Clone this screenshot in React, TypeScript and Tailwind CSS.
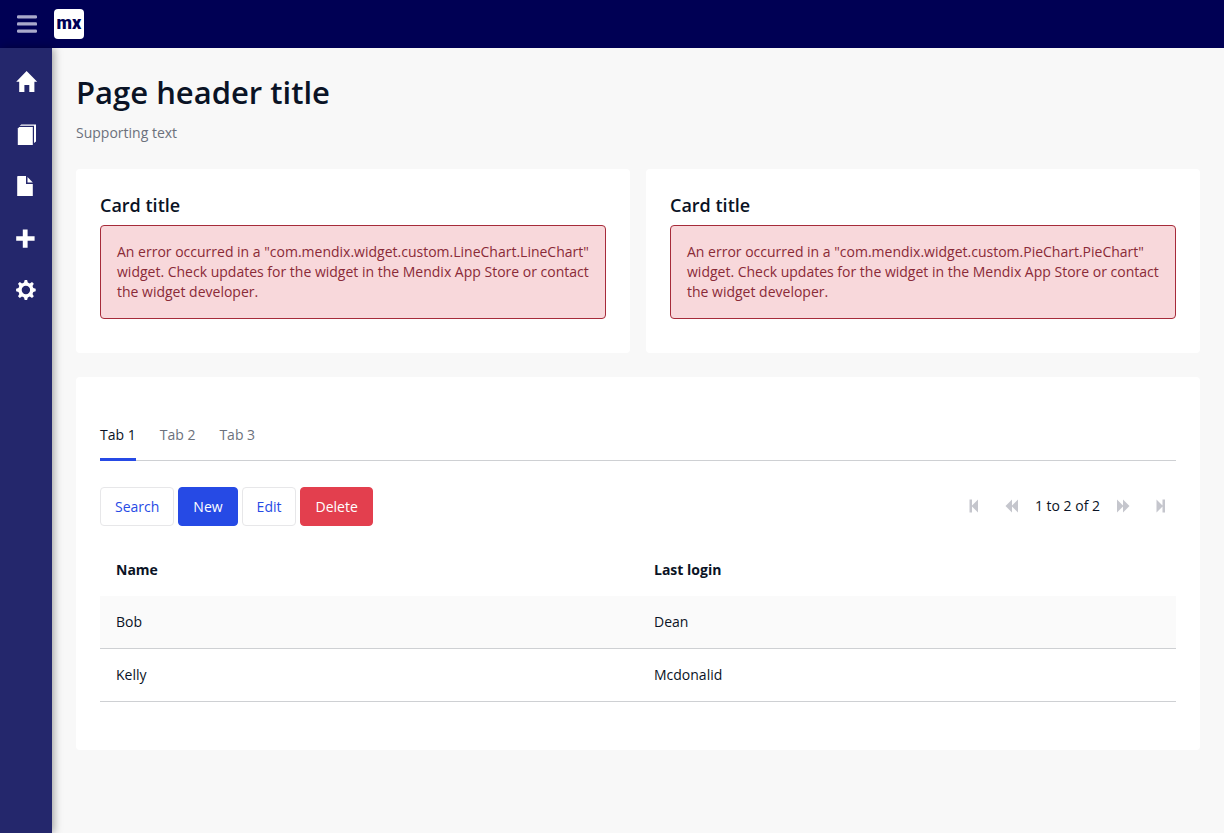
import { useState, type ReactNode } from "react";

function Glyph({ children }: { children: ReactNode }) {
  return (
    <svg viewBox="0 0 22 22" className="h-[22px] w-[22px] shrink-0" fill="currentColor" aria-hidden="true">
      {children}
    </svg>
  );
}

const navItems = [
  { label: "Home", icon: <path d="M10.6 0 21.2 10.8H18.4V21H13.3V14H8.4V21H3.2V10.8H0.2Z" /> },
  {
    label: "Pages",
    icon: (
      <>
        <path d="M3.3 4H16.8V22H1.8V5.5Z" />
        <path d="M3.6 2.8 5.3 1.4H20V18.4L18 20V2.8Z" />
      </>
    ),
  },
  {
    label: "Document",
    icon: (
      <>
        <path d="M2 1H10V9H16.8V21H1.2V1.8A.8.8 0 0 1 2 1Z" />
        <path d="M11.5 2 16.8 7.4H11.5Z" />
      </>
    ),
  },
  { label: "Add", icon: <path d="M6.8 2.4H11.6V9.2H18.6V13.8H11.6V20.7H6.8V13.8H0.2V9.2H6.8Z" /> },
  {
    label: "Settings",
    icon: (
      <path
        fillRule="evenodd"
        d="M8.7 1.1H11.1L11.8 3.6 13.8 4.4 16 3.1 17.8 4.8 16.5 7.1 17.3 9.1 19.7 9.8V12.2L17.3 12.9 16.5 14.9 17.8 17.2 16 18.9 13.8 17.6 11.8 18.4 11.1 20.9H8.7L8 18.4 6 17.6 3.8 18.9 2 17.2 3.3 14.9 2.5 12.9 0.1 12.2V9.8L2.5 9.1 3.3 7.1 2 4.8 3.8 3.1 6 4.4 8 3.6ZM9.9 6.8A4.2 4.2 0 1 0 9.9 15.2 4.2 4.2 0 0 0 9.9 6.8Z"
      />
    ),
  },
];

function Header() {
  return (
    <header className="flex h-12 items-center gap-4 bg-[#000054] px-4">
      <button type="button" aria-label="Toggle menu" className="text-[#a9a9cb]">
        <Glyph>
          <rect x="1" y="2.2" width="20" height="3.3" rx="1.2" />
          <rect x="1" y="9.3" width="20" height="3.3" rx="1.2" />
          <rect x="1" y="16.4" width="20" height="3.3" rx="1.2" />
        </Glyph>
      </button>
      <a
        href="#home"
        className="flex h-[30px] w-[30px] items-center justify-center rounded bg-white pb-0.5 font-['Roboto','Liberation_Sans',sans-serif] text-[18px] leading-5 font-black text-[#000054]"
      >
        mx
      </a>
    </header>
  );
}

function Sidebar() {
  return (
    <nav
      aria-label="Main"
      className="z-10 flex w-[52px] shrink-0 flex-col bg-[#24276c] pt-2 text-white shadow-[2px_0_8px_rgba(0,0,0,0.35)]"
    >
      {navItems.map((item) => (
        <a key={item.label} href="#nav" aria-label={item.label} className="flex h-[52px] items-center pl-4">
          <Glyph>{item.icon}</Glyph>
        </a>
      ))}
    </nav>
  );
}

function ErrorCard({ widget }: { widget: string }) {
  return (
    <section className="rounded bg-white px-6 pt-6 pb-[34px]">
      <h2 className="mb-2 text-[18px] leading-6 font-semibold">Card title</h2>
      <div role="alert" className="rounded border border-[#a62b3a] bg-[#f8d8db] p-4 text-[#8a2a37]">
        {`An error occurred in a "com.mendix.widget.custom.${widget}.${widget}" widget. Check updates for the widget in the Mendix App Store or contact the widget developer.`}
      </div>
    </section>
  );
}

const buttons = [
  { label: "Search", style: "border-[#e7e7e9] bg-white text-[#264ae5]" },
  { label: "New", style: "border-[#264ae5] bg-[#264ae5] text-white" },
  { label: "Edit", style: "border-[#e7e7e9] bg-white text-[#264ae5]" },
  { label: "Delete", style: "border-[#e33f4e] bg-[#e33f4e] text-white" },
];

function PageButton({ label, d }: { label: string; d: string }) {
  return (
    <button type="button" aria-label={label} className="px-3 text-[#c5c6cd]">
      <svg viewBox="0 0 14 14" className="h-3.5 w-3.5" fill="currentColor" aria-hidden="true">
        <path d={d} />
      </svg>
    </button>
  );
}

function Toolbar() {
  return (
    <div className="flex items-center justify-between">
      <div className="flex gap-1">
        {buttons.map((button) => (
          <button
            key={button.label}
            type="button"
            className={`h-[39px] rounded border px-3.5 ${button.style}`}
          >
            {button.label}
          </button>
        ))}
      </div>
      <div className="-mr-1 flex items-center pb-0.5">
        <div className="flex">
          <PageButton label="First page" d="M2.5 .5H5V6.5L11 .5V13.5L5 7.5V13.5H2.5Z" />
          <PageButton label="Previous page" d="M.5 7 7 .5V6.5L13 .5V13.5L7 7.5V13.5Z" />
        </div>
        <span className="px-1">1 to 2 of 2</span>
        <div className="flex">
          <PageButton label="Next page" d="M13.5 7 7 .5V6.5L1 .5V13.5L7 7.5V13.5Z" />
          <PageButton label="Last page" d="M11 .5H8.5V6.5L2.5 .5V13.5L8.5 7.5V13.5H11Z" />
        </div>
      </div>
    </div>
  );
}

const rows = [
  { name: "Bob", login: "Dean" },
  { name: "Kelly", login: "Mcdonalid" },
];

function UserTable() {
  return (
    <table className="w-full table-fixed text-left">
      <thead>
        <tr>
          <th className="px-4 py-4 font-bold">Name</th>
          <th className="px-4 py-4 font-bold">Last login</th>
        </tr>
      </thead>
      <tbody>
        {rows.map((row) => (
          <tr key={row.name} className="border-b border-[#ced0d3] odd:bg-[#fafafa]">
            <td className="p-4">{row.name}</td>
            <td className="p-4">{row.login}</td>
          </tr>
        ))}
      </tbody>
    </table>
  );
}

export default function App() {
  const [active, setActive] = useState("Tab 1");
  return (
    <div className="flex min-h-screen flex-col bg-[#f8f8f8] font-['Open_Sans',sans-serif] text-[14px] leading-5 text-[#0a1325]">
      <Header />
      <div className="flex grow">
        <Sidebar />
        <main className="min-w-0 grow p-6">
          <h1 className="text-[31px] leading-10 font-semibold">Page header title</h1>
          <p className="mt-[11px] text-[#6c717c]">Supporting text</p>
          <div className="mt-[26px] grid grid-cols-2 gap-4">
            <ErrorCard widget="LineChart" />
            <ErrorCard widget="PieChart" />
          </div>
          <section className="mt-6 rounded bg-white px-6 pt-8 pb-12">
            <div role="tablist" className="flex gap-6 border-b border-[#ced0d3]">
              {["Tab 1", "Tab 2", "Tab 3"].map((tab) => (
                <button
                  key={tab}
                  type="button"
                  role="tab"
                  aria-selected={active === tab}
                  onClick={() => setActive(tab)}
                  className={`-mb-px border-b-3 pt-4 pb-[13px] ${
                    active === tab ? "border-[#264ae5]" : "border-transparent text-[#6c717c]"
                  }`}
                >
                  {tab}
                </button>
              ))}
            </div>
            <div className="pt-[26px] pb-[18px]">
              <Toolbar />
            </div>
            <UserTable />
          </section>
        </main>
      </div>
    </div>
  );
}
